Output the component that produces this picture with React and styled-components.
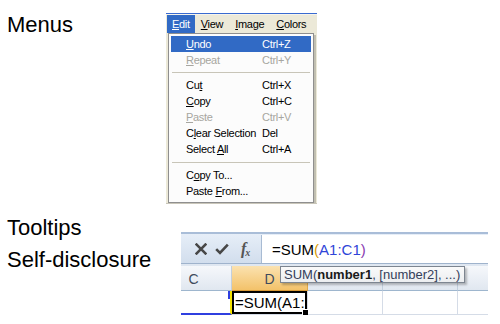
import React from "react";
import styled, { createGlobalStyle } from "styled-components";

const Global = createGlobalStyle`
  html, body { margin: 0; padding: 0; background: #fff; }
  body { font-family: "Liberation Sans", Arial, sans-serif; }
`;

const Page = styled.div`
  width: 500px;
  height: 324px;
  overflow: hidden;
  padding-top: 13px;
  box-sizing: border-box;
  display: flex;
  flex-direction: column;
  background: #fff;
`;

const Section = styled.div`
  display: flex;
  align-items: flex-start;
  margin-top: ${(p) => p.$gap || 0}px;
`;

const Label = styled.div`
  box-sizing: border-box;
  width: ${(p) => p.$width}px;
  padding-left: 7px;
  padding-top: ${(p) => p.$top || 0}px;
  font-family: "Liberation Sans", Arial, sans-serif;
  font-size: 22px;
  line-height: ${(p) => p.$lh}px;
  color: #000;
  flex-shrink: 0;
`;

/* ---------- Menu screenshot ---------- */
const MenuShot = styled.div`
  width: 151px;
  height: 191px;
  background: #ece9d8;
  display: flex;
  flex-direction: column;
  font-family: "Liberation Sans", Tahoma, sans-serif;
  font-size: 11px;
  letter-spacing: -0.3px;
  color: #000;
  overflow: hidden;
  position: relative;
`;

const WindowEdge = styled.div`
  height: 1px;
  background: #3a6bd0;
  border-bottom: 1px solid #f6f4ec;
`;

const MenuBar = styled.div`
  display: flex;
  height: 18px;
  align-items: stretch;
  padding-left: 1px;
  background: #ece9d8;
`;

const BarItem = styled.div`
  display: flex;
  align-items: center;
  padding: 0 ${(p) => p.$pad || 6}px;
  background: ${(p) => (p.$active ? "#316ac5" : "transparent")};
  color: ${(p) => (p.$active ? "#fff" : "#000")};
`;

const Key = styled.span`
  text-decoration: underline;
  text-underline-offset: 1px;
`;

const Dropdown = styled.div`
  margin-left: 2px;
  width: 146px;
  box-sizing: border-box;
  background: #fcfcfc;
  border: 1px solid #8f8f8f;
  box-shadow: 2px 2px 0 rgba(0, 0, 0, 0.18);
  padding: 2px 2px 3px;
  display: flex;
  flex-direction: column;
`;

const Item = styled.div`
  display: grid;
  grid-template-columns: 76px 1fr;
  height: 16px;
  align-items: center;
  padding-left: 15px;
  background: ${(p) => (p.$hl ? "#316ac5" : "transparent")};
  color: ${(p) => (p.$hl ? "#fff" : p.$disabled ? "#a7a6a0" : "#000")};
`;

const Separator = styled.div`
  height: ${(p) => p.$h}px;
  display: flex;
  align-items: center;
  padding: 0 1px;
  &::before {
    content: "";
    flex: 1;
    height: 1px;
    background: #c8c5b8;
  }
`;

const BottomStrip = styled.div`
  flex: 1;
  background: linear-gradient(#d8d5c8, #b9b6aa);
`;

/* ---------- Excel screenshot ---------- */
const ExcelShot = styled.div`
  margin-top: 20px;
  width: 307px;
  height: 86px;
  position: relative;
  overflow: hidden;
  background: #fff;
  font-family: "Liberation Sans", Calibri, sans-serif;
`;

const FormulaBar = styled.div`
  display: flex;
  height: 29px;
  border-top: 2px solid #a9bdd8;
  border-bottom: 1px solid #9fb3cc;
  background: linear-gradient(#e6eef8, #d2deed);
`;

const ButtonBox = styled.div`
  width: 80px;
  flex-shrink: 0;
  display: flex;
  align-items: center;
  padding-left: 14px;
  box-sizing: border-box;
`;

const Slot = styled.span`
  display: inline-flex;
  align-items: center;
  margin-right: ${(p) => p.$mr || 0}px;
  color: #4b4b4b;
`;

const Fx = styled.span`
  font-family: "Liberation Serif", "Times New Roman", serif;
  font-style: italic;
  font-weight: bold;
  font-size: 16px;
  color: #555;
  letter-spacing: -1px;
  & small {
    font-size: 10px;
    position: relative;
    top: 2px;
  }
`;

const FormulaInput = styled.div`
  flex: 1;
  background: #fff;
  border-left: 1px solid #a8bbd3;
  margin-top: 1px;
  display: flex;
  align-items: center;
  padding-left: 10px;
  font-size: 15px;
  color: #000;
`;

const Ref = styled.span`
  color: ${(p) => p.$c};
`;

const Spacer = styled.div`
  height: 2px;
  background: #dfe7f1;
`;

const Grid = styled.div`
  margin-left: -25px;
  display: grid;
  grid-template-columns: 76px 76px 75px 75px 75px;
`;

const HeadCell = styled.div`
  height: 25px;
  box-sizing: border-box;
  border-right: 1px solid ${(p) => (p.$active ? "#e0a94a" : "#c3cfdd")};
  border-bottom: 1px solid ${(p) => (p.$active ? "#d99a37" : "#9eb6ce")};
  background: ${(p) =>
    p.$active
      ? "linear-gradient(#fbe2b0, #f3c26a)"
      : "linear-gradient(#f6f8fb, #e0e7f0)"};
  display: flex;
  align-items: center;
  justify-content: center;
  font-size: 14px;
  color: #3e4b5d;
  padding-top: 1px;
`;

const Cell = styled.div`
  height: 24px;
  box-sizing: border-box;
  border-right: 1px solid #d5dce7;
  border-bottom: 1px solid #d5dce7;
  font-size: 15px;
  display: flex;
  align-items: center;
  position: relative;
  ${(p) =>
    p.$range &&
    `
    border-bottom: 2px solid #2f3fe0;
    border-right: 2px solid #f4e200;
  `}
  ${(p) =>
    p.$active &&
    `
    box-shadow: inset 0 0 0 2px #000;
    padding-left: 3px;
  `}
`;

const RangeMark = styled.span`
  position: absolute;
  right: 0;
  top: 0;
  width: 2px;
  height: 8px;
  background: #2f3fe0;
`;

const FillHandle = styled.span`
  position: absolute;
  right: -2px;
  bottom: -2px;
  width: 5px;
  height: 5px;
  background: #000;
  border: 1px solid #fff;
`;

const Tooltip = styled.div`
  position: absolute;
  left: 99px;
  top: 34px;
  height: 17px;
  box-sizing: border-box;
  padding: 0 4px 0 3px;
  display: flex;
  align-items: center;
  background: linear-gradient(#fafafa, #eceef0);
  border: 1px solid #7d8590;
  box-shadow: 2px 2px 2px rgba(0, 0, 0, 0.25);
  font-size: 13px;
  color: #34405a;
  white-space: nowrap;
  & b {
    color: #1a1a1a;
  }
`;

const CrossIcon = () => (
  <svg width="12" height="12" viewBox="0 0 12 12">
    <path d="M1.6 1.6 L10.4 10.4 M10.4 1.6 L1.6 10.4" stroke="#474747" strokeWidth="2.6" strokeLinecap="square" fill="none" />
  </svg>
);

const CheckIcon = () => (
  <svg width="14" height="12" viewBox="0 0 14 12">
    <path d="M1.2 6.2 L5 10 L12.8 1.6" stroke="#474747" strokeWidth="2.6" fill="none" />
  </svg>
);

const menuItems = [
  { label: ["", "U", "ndo"], sc: "Ctrl+Z", hl: true },
  { label: ["", "R", "epeat"], sc: "Ctrl+Y", disabled: true },
  { sep: 9 },
  { label: ["Cu", "t", ""], sc: "Ctrl+X" },
  { label: ["", "C", "opy"], sc: "Ctrl+C" },
  { label: ["", "P", "aste"], sc: "Ctrl+V", disabled: true },
  { label: ["C", "l", "ear Selection"], sc: "Del" },
  { label: ["Select ", "A", "ll"], sc: "Ctrl+A" },
  { sep: 10 },
  { label: ["C", "o", "py To..."], sc: "" },
  { label: ["Paste ", "F", "rom..."], sc: "" },
];

export default function App() {
  return (
    <>
      <Global />
      <Page>
        <Section>
          <Label $width={166} $lh={22} $top={1}>Menus</Label>
          <MenuShot>
            <WindowEdge />
            <MenuBar>
              <BarItem $active $pad={5}>
                <span><Key>E</Key>dit</span>
              </BarItem>
              <BarItem $pad={6}>
                <span><Key>V</Key>iew</span>
              </BarItem>
              <BarItem $pad={6}>
                <span><Key>I</Key>mage</span>
              </BarItem>
              <BarItem $pad={6}>
                <span><Key>C</Key>olors</span>
              </BarItem>
            </MenuBar>
            <Dropdown>
              {menuItems.map((m, i) =>
                m.sep ? (
                  <Separator key={i} $h={m.sep} />
                ) : (
                  <Item key={i} $hl={m.hl} $disabled={m.disabled}>
                    <span>
                      {m.label[0]}
                      <Key>{m.label[1]}</Key>
                      {m.label[2]}
                    </span>
                    <span>{m.sc}</span>
                  </Item>
                )
              )}
            </Dropdown>
            <BottomStrip />
          </MenuShot>
        </Section>
        <Section $gap={8}>
          <Label $width={181} $lh={32}>
            Tooltips
            <br />
            Self-disclosure
          </Label>
          <ExcelShot>
            <FormulaBar>
              <ButtonBox>
                <Slot $mr={8}><CrossIcon /></Slot>
                <Slot $mr={12}><CheckIcon /></Slot>
                <Slot><Fx>f<small>x</small></Fx></Slot>
              </ButtonBox>
              <FormulaInput>
                =SUM<Ref $c="#d99a00">(</Ref>
                <Ref $c="#2f45d8">A1:C1</Ref>
                <Ref $c="#8a3cb0">)</Ref>
              </FormulaInput>
            </FormulaBar>
            <Spacer />
            <Grid>
              <HeadCell>C</HeadCell>
              <HeadCell $active>D</HeadCell>
              <HeadCell />
              <HeadCell />
              <HeadCell />
              <Cell $range>
                <RangeMark />
              </Cell>
              <Cell $active>
                =SUM(A1:
                <FillHandle />
              </Cell>
              <Cell />
              <Cell />
              <Cell />
            </Grid>
            <Tooltip>
              SUM(<b>number1</b>, [number2], ...)
            </Tooltip>
          </ExcelShot>
        </Section>
      </Page>
    </>
  );
}
